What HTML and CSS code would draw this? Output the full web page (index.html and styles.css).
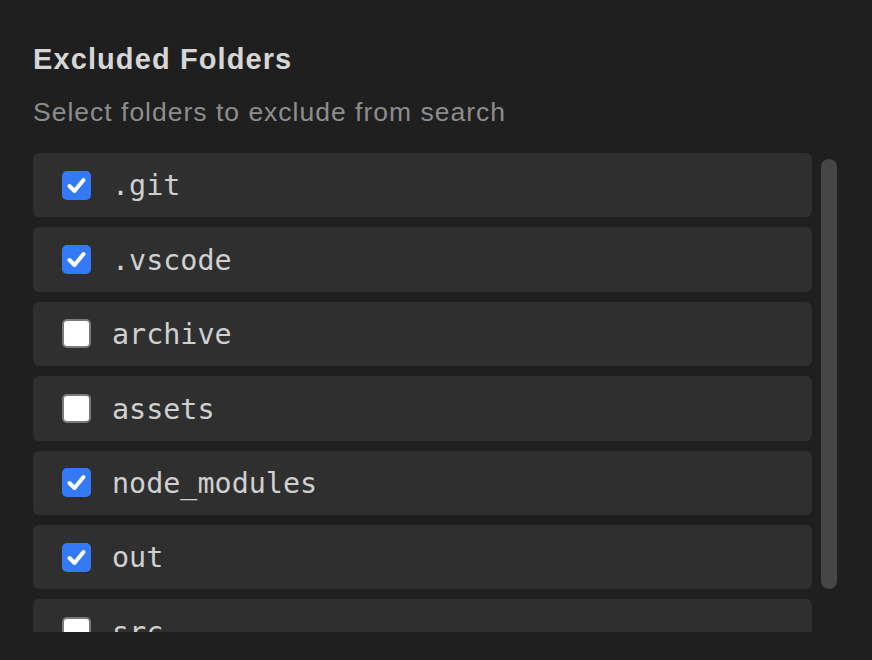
FILE: index.html
```html
<!DOCTYPE html>
<html>
<head>
<meta charset="utf-8">
<link rel="stylesheet" href="styles.css">
</head>
<body>
<div class="panel">
  <h1 class="title">Excluded Folders</h1>
  <p class="subtitle">Select folders to exclude from search</p>
  <div class="scroller">
    <ul class="list">
      <li class="row"><span class="box checked"><svg viewBox="0 0 29 29"><path d="M7.5 15 L12.5 20 L21.5 9"/></svg></span><span class="name">.git</span></li>
      <li class="row"><span class="box checked"><svg viewBox="0 0 29 29"><path d="M7.5 15 L12.5 20 L21.5 9"/></svg></span><span class="name">.vscode</span></li>
      <li class="row"><span class="box"></span><span class="name">archive</span></li>
      <li class="row"><span class="box"></span><span class="name">assets</span></li>
      <li class="row"><span class="box checked"><svg viewBox="0 0 29 29"><path d="M7.5 15 L12.5 20 L21.5 9"/></svg></span><span class="name">node_modules</span></li>
      <li class="row"><span class="box checked"><svg viewBox="0 0 29 29"><path d="M7.5 15 L12.5 20 L21.5 9"/></svg></span><span class="name">out</span></li>
      <li class="row"><span class="box"></span><span class="name">src</span></li>
    </ul>
    <div class="track"><div class="thumb"></div></div>
  </div>
</div>
</body>
</html>
```

FILE: styles.css
```css
html, body {
  margin: 0;
  padding: 0;
  background: #1f1f1f;
  width: 872px;
  height: 660px;
  overflow: hidden;
}
.panel {
  padding: 40px 0 0 33px;
  font-family: "Liberation Sans", Arial, sans-serif;
}
.title {
  margin: 0;
  font-size: 29px;
  font-weight: bold;
  letter-spacing: 1.1px;
  line-height: 38px;
  color: #d6d6d6;
}
.subtitle {
  margin: 16px 0 0 0;
  font-size: 26.5px;
  letter-spacing: 1px;
  line-height: 36px;
  color: #8d8d8d;
}
.scroller {
  margin-top: 23px;
  display: flex;
  height: 479px;
}
.list {
  list-style: none;
  margin: 0;
  padding: 0;
  width: 779px;
  height: 479px;
  overflow: hidden;
  display: flex;
  flex-direction: column;
  gap: 10px;
}
.row {
  flex: none;
  height: 64.4px;
  background: #2f2f2f;
  border-radius: 6px;
  display: flex;
  align-items: center;
  padding-left: 29px;
}
.box {
  width: 29px;
  height: 29px;
  box-sizing: border-box;
  border-radius: 5px;
  background: #ffffff;
  border: 2px solid #7a7a7a;
  flex: none;
  display: flex;
}
.box.checked {
  background: #3479f6;
  border: none;
}
.box svg {
  width: 29px;
  height: 29px;
}
.box svg path {
  fill: none;
  stroke: #ffffff;
  stroke-width: 4;
  stroke-linecap: round;
  stroke-linejoin: round;
}
.name {
  margin-left: 21px;
  padding-top: 3px;
  font-family: "DejaVu Sans Mono", monospace;
  font-size: 28.4px;
  color: #d0d0d0;
  line-height: 1;
}
.track {
  margin-left: 9px;
  width: 16px;
  padding-top: 6px;
}
.thumb {
  width: 16px;
  height: 430px;
  border-radius: 8px;
  background: #464646;
}
```
